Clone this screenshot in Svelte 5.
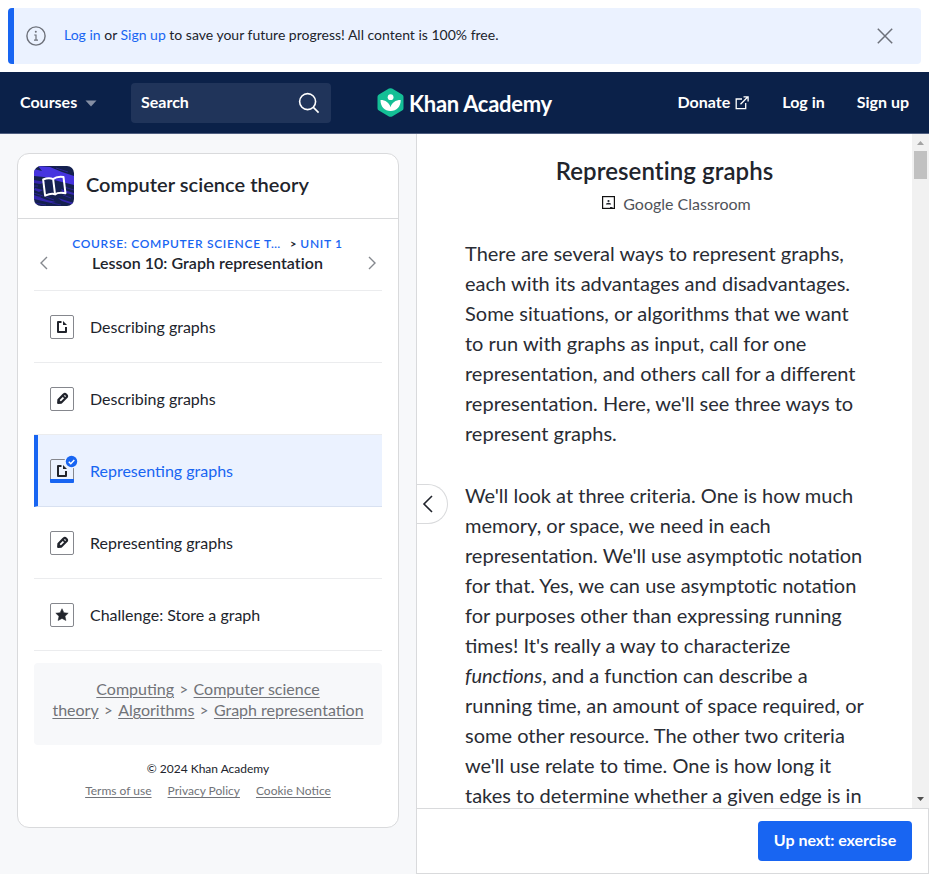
<script>
  const lessons = [
    { title: 'Describing graphs', kind: 'article' },
    { title: 'Describing graphs', kind: 'exercise' },
    { title: 'Representing graphs', kind: 'article', active: true },
    { title: 'Representing graphs', kind: 'exercise' },
    { title: 'Challenge: Store a graph', kind: 'challenge' }
  ];
  const intro = [
    'There are several ways to represent graphs,',
    'each with its advantages and disadvantages.',
    'Some situations, or algorithms that we want',
    'to run with graphs as input, call for one',
    'representation, and others call for a different',
    "representation. Here, we'll see three ways to",
    'represent graphs.'
  ];
</script>

<div class="page">
  <div class="banner-wrap">
    <div class="banner">
      <svg class="info" width="20" height="20" viewBox="0 0 20 20" fill="none" stroke="#6d717a" stroke-width="1.4">
        <circle cx="10" cy="10" r="9.1" /><circle cx="9.8" cy="5.8" r="1" fill="#6d717a" stroke="none" />
        <path d="M8.2 9H10V14M8 14.1H12" stroke-width="1.2" />
      </svg>
      <p><a href="#login">Log in</a> or <a href="#signup">Sign up</a> to save your future progress! All content is 100% free.</p>
      <svg class="close" width="16" height="16" viewBox="0 0 16 16" stroke="#6d717a" stroke-width="1.5"><path d="M.8.8 15.2 15.2M15.2.8.8 15.2" /></svg>
    </div>
  </div>

  <header>
    <div class="left">
      <span class="courses">Courses</span>
      <svg class="caret" width="12" height="7" viewBox="0 0 12 7"><path d="M.5.5h11L6 6.5z" fill="#858fa4" /></svg>
      <div class="search">
        <span>Search</span>
        <svg width="22" height="22" viewBox="0 0 22 22" fill="none" stroke="#fff" stroke-width="1.6"><circle cx="9.6" cy="9.6" r="8" /><path d="m15.4 15.4 5.2 5.2" /></svg>
      </div>
    </div>
    <div class="brand">
      <svg width="27" height="29" viewBox="0 0 27 29">
        <path d="M11.9.6q1.6-.8 3.2 0l10 5.8q1.4.8 1.4 2.4v11.4q0 1.6-1.4 2.4l-10 5.8q-1.6.8-3.2 0l-10-5.8Q.5 21.800.5 20.200V8.800Q.5 7.200 1.900 6.400z" fill="#14bf96" />
        <circle cx="13.6" cy="9.200" r="2.900" fill="#fff" />
        <path d="M3.500 12C8.500 12 12.300 14.700 13.500 19.200C14.700 14.700 18.500 12 23.700 12C23.700 18.700 19.700 23 13.600 23S3.500 18.700 3.500 12z" fill="#fff" />
      </svg>
      <span class="wordmark">Khan Academy</span>
    </div>
    <nav>
      <span class="donate">Donate</span>
      <svg class="ext" width="14" height="14" viewBox="0 0 14 14" fill="none" stroke="#fff" stroke-width="1.300"><path d="M7 3H1.200v9.700h9.500V7M5.500 8.200 12.700 1M8.500.9h4.600v4.600" /></svg>
      <span class="login">Log in</span>
      <span class="signup">Sign up</span>
    </nav>
  </header>

  <main>
    <aside>
      <section class="card">
        <div class="course">
          <svg width="40" height="40" viewBox="0 0 40 40">
            <defs><clipPath id="tile"><rect width="40" height="40" rx="7" /></clipPath></defs>
            <g clip-path="url(#tile)">
              <rect width="40" height="40" fill="#14204f" />
              <path d="M4 0 16 1 28 6 40 10v9L24 15 10 11 0 10V3l8 2z" fill="#4634df" />
              <path d="M0 14 12 16 6 18 0 17zM1 22l8 2-4 2-5-2zM0 29l13 5 9 2-5 1L0 33zM27 23l13 4v2l-12-3zM24 32l16 5v2l-12-4z" fill="#3426ac" />
              <path d="M0 20h4M8 21h3M0 27l9 3M2 31h5M12 31l8 3M18 37l9 2M0 37l12 2M29 29l8 3M30 21l10 3M22 2l12 4" stroke="#3025a2" stroke-width=".8" />
              <g transform="rotate(-7 20 20)" fill="none" stroke="#fff" stroke-width="2" stroke-linejoin="round">
                <path d="M20 13Q16 10.500 10 12.200V28.500Q17 26.500 20 28.500Q23 26.500 30.500 28.500V12.200Q24 10.500 20 13zM20 13v15" />
              </g>
            </g>
          </svg>
          <h2>Computer science theory</h2>
        </div>
        <div class="lesson">
          <svg width="8" height="14" viewBox="0 0 8 14" fill="none" stroke="#85888e" stroke-width="1.400"><path d="M7 1 1 7l6 6" /></svg>
          <div class="titles">
            <div class="crumb"><span class="blue c1">Course: Computer science t…</span><b>&gt;</b><span class="blue c2">Unit 1</span></div>
            <h3>Lesson 10: Graph representation</h3>
          </div>
          <svg width="8" height="14" viewBox="0 0 8 14" fill="none" stroke="#85888e" stroke-width="1.400"><path d="m1 1 6 6-6 6" /></svg>
        </div>
        <ul>
          {#each lessons as item}
            <li class:active={item.active}>
              <svg class="kind" width="24" height="24" viewBox="0 0 24 24">
                <rect x=".5" y=".5" width="23" height="23" rx="1.500" fill={item.active ? 'none' : '#fff'} stroke="#85878d" />
                {#if item.kind === 'article'}
                  <path d="M11.500 7H8v10h8v-5" fill="none" stroke="#21242c" stroke-width="2" stroke-linejoin="round" /><path d="m13 6 4 4h-4z" fill="#21242c" />
                {:else if item.kind === 'exercise'}
                  <g transform="rotate(45 12 12)"><path d="M10 8.200V7.600q0-1.600 2-1.600t2 1.600V15l-2 2.400-2-2.400z" fill="none" stroke="#21242c" stroke-width="2.200" stroke-linejoin="round" /><path d="M10 9.200h4" stroke="#21242c" stroke-width="1.600" /><path d="M10 14.500h4l-2 3z" fill="#21242c" /></g>
                {:else}
                  <path d="m12 5.700 1.900 4 4.300.5-3.200 3 .9 4.300-3.900-2.100-3.900 2.100.9-4.300-3.200-3 4.300-.5z" fill="#21242c" stroke="#21242c" stroke-linejoin="round" stroke-width=".5" />
                {/if}
                {#if item.active}
                  <path d="M0 20h24v3q0 1-1 1H1q-1 0-1-1z" fill="#1865f2" />
                  <circle cx="21.500" cy="2.500" r="7" fill="#ebf2ff" /><circle cx="21.500" cy="2.500" r="5.700" fill="#1865f2" /><path d="m18.800 2.700 2 2 3.500-3.600" fill="none" stroke="#fff" stroke-width="1.500" />
                {/if}
              </svg>
              <span>{item.title}</span>
            </li>
          {/each}
        </ul>
        <div class="trail"><div class="t1"><u>Computing</u><i>&gt;</i><u>Computer science</u></div><div class="t2"><u>theory</u><i>&gt;</i><u>Algorithms</u><i>&gt;</i><u>Graph representation</u></div></div>
        <p class="copyright">© 2024 Khan Academy</p>
        <div class="legal"><u>Terms of use</u><u>Privacy Policy</u><u>Cookie Notice</u></div>
      </section>
    </aside>

    <section class="reader">
      <div class="viewport">
        <article>
          <h1>Representing graphs</h1>
          <div class="classroom">
            <svg width="13" height="13" viewBox="0 0 13 13"><rect x=".6" y=".6" width="11.800" height="11.800" fill="none" stroke="#111" stroke-width="1.200" /><circle cx="6.500" cy="5" r="1.100" fill="#21242c" /><path d="M3.800 8.500q0-1.700 2.700-1.700t2.700 1.700zM8 11h2.500v1H8z" fill="#21242c" /></svg>
            <span>Google Classroom</span>
          </div>
          <p>{#each intro as line}{line}<br />{/each}</p>
          <p>We'll look at three criteria. One is how much<br />memory, or space, we need in each<br />representation. We'll use asymptotic notation<br />for that. Yes, we can use asymptotic notation<br />for purposes other than expressing running<br />times! It's really a way to characterize<br /><em>functions</em>, and a function can describe a<br />running time, an amount of space required, or<br />some other resource. The other two criteria<br />we'll use relate to time. One is how long it<br />takes to determine whether a given edge is in</p>
        </article>
        <div class="scroll">
          <svg width="17" height="17" viewBox="0 0 17 17"><path d="M5 11h7L8.500 7z" fill="#a3a3a3" /></svg>
          <div class="thumb"></div>
          <svg class="down" width="17" height="17" viewBox="0 0 17 17"><path d="M5 6h7l-3.500 4z" fill="#505050" /></svg>
        </div>
      </div>
      <footer><button>Up next: exercise</button></footer>
      <div class="collapse"><svg width="12" height="18" viewBox="0 0 12 18" fill="none" stroke="#21242c" stroke-width="1.600"><path d="M10 1 2 9l8 8" /></svg></div>
    </section>
  </main>
</div>

<style>
  :global(body) { margin: 0; }
  .page { height: 874px; display: flex; flex-direction: column; overflow: hidden; background: #fff; color: #21242c; font-family: Lato, "Noto Sans", sans-serif; font-size: 16px; }
  h1, h2, h3, p, ul { margin: 0; padding: 0; }
  .banner-wrap { height: 72px; flex: none; padding: 8px; box-sizing: border-box; }
  .banner { height: 56px; box-sizing: border-box; display: flex; align-items: center; background: #ebf2ff; border-radius: 4px; border-left: 6px solid #1865f2; padding: 0 28px 0 12px; }
  .banner p { font-size: 14px; line-height: 20px; margin-left: 18px; flex: 1; padding-bottom: 2px; }
  .banner a { color: #1865f2; text-decoration: none; }
  header { height: 62px; flex: none; box-sizing: border-box; border-bottom: 1px solid #4f5e80; background: #0b2149; display: grid; grid-template-columns: 377px 1fr auto; align-items: center; color: #fff; font-weight: 700; }
  header span { padding-bottom: 2px; }
  .left { display: flex; align-items: center; padding-left: 20px; }
  .courses { width: 57px; margin-right: 8px; }
  .caret { margin: 1px 34px 0 0; }
  .search { display: flex; align-items: center; justify-content: space-between; width: 200px; height: 40px; box-sizing: border-box; padding: 0 11px 0 10px; background: #20345a; border-radius: 4px; }
  .brand { display: flex; align-items: center; gap: 5px; }
  .brand .wordmark { font-size: 22px; line-height: 30px; letter-spacing: -.3px; white-space: nowrap; padding: 2px 0 0; }
  .brand svg { margin-top: -1px; }
  nav { display: flex; align-items: center; padding-right: 20px; }
  .ext { margin: 0 33px 0 5px; }
  .login { margin-right: 32px; }
  main { flex: 1; min-height: 0; display: flex; }
  aside { width: 416px; box-sizing: border-box; background: #f7f8fa; padding: 19px 17px; flex: none; }
  .card { height: 675px; box-sizing: border-box; background: #fff; border: 1px solid #d9dadc; border-radius: 12px; }
  .course { height: 64px; border-bottom: 1px solid #d9dadc; display: flex; align-items: center; gap: 12px; padding-left: 16px; }
  h2 { font-size: 20px; line-height: 24px; font-weight: 600; padding-bottom: 4px; letter-spacing: .04px; }
  .lesson { height: 71px; margin: 0 16px; border-bottom: 1px solid #ebecee; display: flex; align-items: flex-start; padding: 0 6.500px 0 5.500px; box-sizing: content-box; }
  .lesson > svg { margin-top: 37px; flex: none; }
  .titles { flex: 1; padding-top: 16px; text-align: center; }
  .crumb { display: flex; justify-content: center; align-items: center; height: 16px; font-size: 12px; letter-spacing: .69px; text-transform: uppercase; white-space: nowrap; }
  .crumb .blue { color: #1865f2; font-weight: 600; }
  .crumb b { font-size: 11px; margin: 0 4px 0 9px; letter-spacing: 0; }
  h3 { font-size: 16px; line-height: 20px; font-weight: 600; margin-top: 2px; letter-spacing: .04px; }
  ul { margin: 0 16px; list-style: none; }
  li { height: 72px; box-sizing: border-box; border-bottom: 1px solid #ebecee; display: flex; align-items: center; padding-left: 16px; gap: 16px; }
  li.active { border-left: 4px solid #1865f2; padding-left: 12px; background: #ebf2ff; color: #1865f2; border-bottom-color: #d8e1f1; }
  .kind { overflow: visible; }
  .trail { height: 82px; margin: 12px 16px 0; box-sizing: border-box; padding-top: 15px; background: #f7f8fa; border-radius: 4px; color: #717378; line-height: 21px; text-align: center; white-space: nowrap; }
  .trail > div { height: 21px; }
  .trail i { font-style: normal; font-size: 15px; line-height: 14px; margin: 0 5.400px; }
  u { text-underline-offset: 2px; }
  .copyright { font-size: 12px; line-height: 20px; text-align: center; margin-top: 14px; }
  .legal { display: flex; justify-content: center; gap: 16px; font-size: 12px; line-height: 20px; margin-top: 2px; color: #717378; }
  .reader { position: relative; flex: 1; min-width: 0; display: flex; flex-direction: column; border-left: 1px solid #d9dadc; }
  .viewport { flex: 1; min-height: 0; display: flex; overflow: hidden; }
  article { flex: 1; padding: 22px 0 0 48px; }
  h1 { font-size: 24px; line-height: 30px; font-weight: 600; text-align: center; margin-right: 48px; letter-spacing: .09px; }
  .classroom { display: flex; align-items: center; justify-content: center; gap: 8px; height: 20px; margin: 7px 24px 25px 0; color: #50535a; }
  .classroom svg { margin-top: -1px; }
  article p { font-size: 20px; line-height: 30px; white-space: nowrap; margin-bottom: 32px; color: #292c34; }
  .scroll { width: 17px; background: #f1f1f1; display: flex; flex-direction: column; align-items: center; }
  .thumb { width: 13px; height: 28px; background: #c1c1c1; }
  .down { margin-top: auto; }
  footer { height: 66px; flex: none; box-sizing: border-box; border: 1px solid #d9dadc; border-left: 0; display: flex; align-items: center; justify-content: flex-end; padding-right: 16px; }
  button { height: 40px; width: 154px; padding: 0 0 3px; border: 0; border-radius: 4px; background: #1865f2; color: #fff; font: 700 16px Lato, sans-serif; }
  .collapse { position: absolute; left: 0; top: 350px; width: 31px; height: 40px; box-sizing: border-box; border: 1px solid #d9dadc; border-left: 0; border-radius: 0 20px 20px 0; display: flex; align-items: center; padding-left: 5px; background: #fff; }
</style>
